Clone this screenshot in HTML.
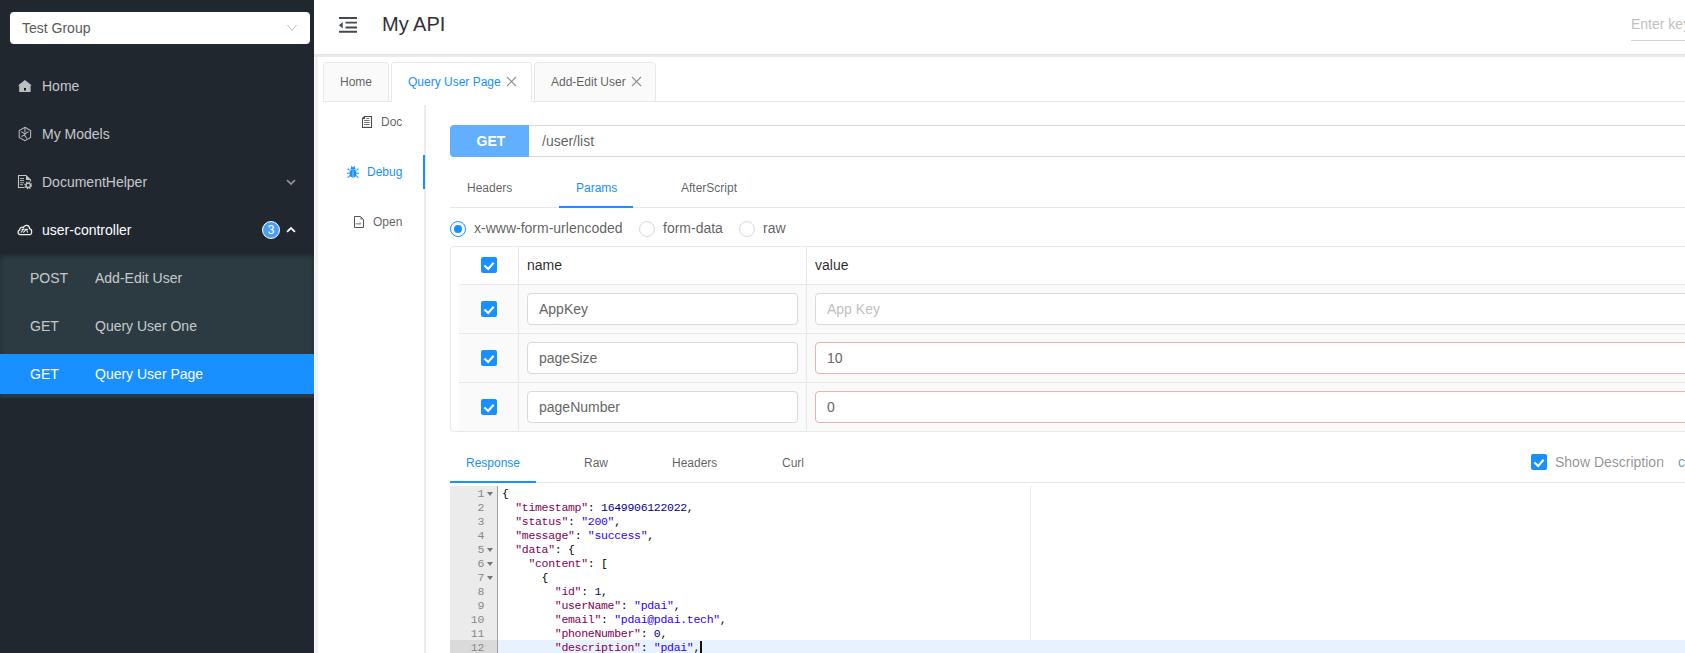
<!DOCTYPE html>
<html><head><meta charset="utf-8">
<style>
*{box-sizing:border-box;margin:0;padding:0}
html,body{width:1685px;height:653px;overflow:hidden;background:#fff;font-family:"Liberation Sans",sans-serif;}
.abs{position:absolute}
#side{position:absolute;left:0;top:0;width:314px;height:653px;background:#20272e}
#sel{position:absolute;left:10px;top:12px;width:300px;height:32px;background:#fff;border-radius:4px}
#sel span{position:absolute;left:12px;top:0;line-height:32px;font-size:14px;color:#595959}
.mi{position:absolute;left:0;width:314px;height:48px;line-height:48px;font-size:14px;color:rgba(255,255,255,.76)}
.mi .t{position:absolute;left:42px;top:0}
.mi svg{position:absolute}
#sub{position:absolute;left:0;top:254px;width:314px;height:144px;background:#2c3b41;box-shadow:inset 0 2px 5px rgba(0,0,0,.3)}
.si{position:absolute;left:0;width:314px;height:40px;line-height:40px;font-size:14px;color:rgba(255,255,255,.74)}
.si .m{position:absolute;left:30px}
.si .n{position:absolute;left:95px}
.si.on{background:#1890ff;color:#fff}
#hdr{position:absolute;left:314px;top:0;width:1371px;height:54px;background:#fff}
#gbar{position:absolute;left:314px;top:54px;width:1371px;height:3px;background:#e9ebef;border-top:1px solid #e3e4e7}
#gstrip{position:absolute;left:314px;top:57px;width:4px;height:596px;background:#f0f1f4;border-left:1px solid #fbfbfc}
.tab{position:absolute;top:62px;height:40px;border:1px solid #e8e8e8;border-radius:4px 4px 0 0;background:#fafafa;font-size:12px;line-height:38px;color:rgba(0,0,0,.65);white-space:nowrap}
.tab.on{background:#fff;color:#1890ff;border-bottom-color:#fff}
.x{position:absolute;top:0}
.vt{position:absolute;font-size:12px;color:rgba(0,0,0,.65);white-space:nowrap}
.vt svg{position:absolute}
.itab{position:absolute;font-size:12px;color:rgba(0,0,0,.65);white-space:nowrap}
.radio{position:absolute;width:16px;height:16px;border:1px solid #d9d9d9;border-radius:50%;background:#fff}
.radio.on{border-color:#1890ff}
.radio.on::after{content:"";position:absolute;left:3px;top:3px;width:8px;height:8px;border-radius:50%;background:#1890ff}
.rl{position:absolute;font-size:14px;color:rgba(0,0,0,.65);white-space:nowrap}
.cb{position:absolute;width:16px;height:16px;background:#1890ff;border-radius:2px}

.inp{position:absolute;height:32px;border:1px solid #d9d9d9;border-radius:4px;background:#fff;font-size:14px;line-height:30px;padding-left:11px;color:#666;white-space:nowrap;overflow:hidden}
.inp.err{border-color:#e9b1b1}
.hl{position:absolute;background:#e8e8e8}
#ed{position:absolute;left:450px;top:486px;width:1235px;height:167px;overflow:hidden;font-family:"Liberation Mono",monospace;font-size:11.5px;letter-spacing:-0.3px}
#gut{position:absolute;left:0;top:0;width:48px;height:167px;background:#ebebeb;border-right:1px solid #9f9f9f}
.ln{position:absolute;left:0;width:47px;height:14px;line-height:16px;text-align:right;padding-right:13px;color:#888}
.cl{position:absolute;left:52px;height:14px;line-height:16px;white-space:pre;color:#000}
.k{color:#7f0055}.s{color:#2a00ff}.nm{color:#00008b}
</style></head><body>
<div id="side">
  <div id="sel"><span>Test Group</span>
    <svg class="abs" style="left:277px;top:12px" width="10" height="8" viewBox="0 0 10 8"><path d="M0.5 1 L5 6.5 L9.5 1" fill="none" stroke="#bfbfbf" stroke-width="1"/></svg>
  </div>
  <div class="mi" style="top:62px">
    <svg style="left:14px;top:14px" width="24" height="20" viewBox="0 0 24 20"><path d="M10.9 3.9 L17.9 9.6 L16.6 9.6 L16.6 16 L5.2 16 L5.2 9.6 L3.9 9.6 Z" fill="#bcbfc0"/><rect x="10" y="12" width="1.9" height="2.5" fill="#0d1216"/></svg>
    <span class="t">Home</span></div>
  <div class="mi" style="top:110px">
    <svg style="left:14px;top:14px" width="24" height="20" viewBox="0 0 24 20"><g fill="none" stroke="#b4b7b9" stroke-width="1.05"><path d="M10.9 3.3 L16.6 6.5 V13.5 L10.9 16.7 L5.2 13.5 V6.5 Z"/><path d="M10.9 3.3 V8.2 M7.2 7.6 L10.9 9.8 L14.6 7.6 M10.9 9.8 V12 M7.5 12.5 L10.9 10.6 M13 14.5 L10.9 12"/></g></svg>
    <span class="t">My Models</span></div>
  <div class="mi" style="top:158px">
    <svg style="left:14px;top:14px" width="24" height="20" viewBox="0 0 24 20"><g fill="none" stroke="#c4c7c9" stroke-width="1.1"><path d="M10.5 15.5 H4.5 V3.5 H12 L16.5 8 V9.5"/></g><path d="M12 3.5 V8 H16.5 Z" fill="#c4c7c9"/><g fill="#b0b4b6"><rect x="6" y="6" width="4" height="1"/><rect x="6" y="8" width="4" height="1"/><rect x="6" y="10.2" width="4" height="1"/><rect x="6" y="12.2" width="3" height="1"/></g><circle cx="14.2" cy="13.3" r="2.2" fill="none" stroke="#c4c7c9" stroke-width="1.4"/><circle cx="14.2" cy="13.3" r="3.3" fill="none" stroke="#c4c7c9" stroke-width="1.3" stroke-dasharray="1.3 1.3"/></svg>
    <span class="t">DocumentHelper</span>
    <svg style="left:286px;top:21px" width="10" height="7" viewBox="0 0 10 7"><path d="M1 1.2 L5 5 L9 1.2" fill="none" stroke="#8a8e91" stroke-width="1.8"/></svg>
  </div>
  <div class="mi" style="top:206px;color:#fff">
    <svg style="left:14px;top:14px" width="24" height="20" viewBox="0 0 24 20"><path d="M6.3 14.6 C3.6 14.6 3.3 10.6 5.6 10.1 C5.5 7.6 8 6.6 9.4 7.6 C10.4 4.4 15.4 4.6 15.6 8.6 C18.4 9.2 18.2 14.6 15.9 14.6 Z" fill="none" stroke="#f0f0f0" stroke-width="1.3"/><path d="M6.8 12.6 L9.6 9.4 H7.4 M9.3 12.6 L12 9.4 M10.6 9.2 H14 M12.6 9.3 L13.6 12.6" fill="none" stroke="#e6e6e6" stroke-width="1.1"/></svg>
    <span class="t">user-controller</span>
    <div class="abs" style="left:262px;top:15px;width:18px;height:18px;border-radius:50%;background:#4c9ff0;border:1px solid #fff;font-size:12px;line-height:16px;text-align:center;color:#fff">3</div>
    <svg style="left:286px;top:20px" width="10" height="7" viewBox="0 0 10 7"><path d="M1 5.8 L5 2 L9 5.8" fill="none" stroke="#fff" stroke-width="1.8"/></svg>
  </div>
  <div id="sub">
    <div class="si" style="top:4px"><span class="m">POST</span><span class="n">Add-Edit User</span></div>
    <div class="si" style="top:52px"><span class="m">GET</span><span class="n">Query User One</span></div>
    <div class="si on" style="top:100px"><span class="m">GET</span><span class="n">Query User Page</span></div>
  </div>
</div>

<div id="hdr">
  <svg class="abs" style="left:25px;top:17px" width="18" height="16" viewBox="0 0 18 16"><path d="M0 1 H18 M6.5 5.6 H18 M6.5 10.5 H18 M0 14.8 H18" stroke="#45494d" stroke-width="1.9"/><path d="M0 8.2 L3.7 4.9 L3.7 11.5 Z" fill="#45494d"/></svg>
  <div class="abs" style="left:68px;top:12px;font-size:20px;line-height:24px;color:#303133">My API</div>
  <div class="abs" style="left:1317px;top:15px;font-size:14px;line-height:18px;color:#bfbfbf;white-space:nowrap">Enter keywords</div>
  <div class="abs" style="left:1317px;top:40px;width:60px;height:1px;background:#d4d4d4"></div>
</div>
<div id="gbar"></div>
<div id="gstrip"></div>

<!-- tabs -->
<div class="hl" style="left:323px;top:101px;width:1362px;height:1px"></div>
<div class="tab" style="left:323px;width:66px"><span class="abs" style="left:16px">Home</span></div>
<div class="tab on" style="left:391px;width:141px"><span class="abs" style="left:16px">Query User Page</span>
  <svg class="x" style="left:114px;top:13px" width="11" height="11" viewBox="0 0 11 11"><path d="M1 1 L10 10 M10 1 L1 10" stroke="#8f8f8f" stroke-width="1.1"/></svg></div>
<div class="tab" style="left:534px;width:122px"><span class="abs" style="left:16px">Add-Edit User</span>
  <svg class="x" style="left:96px;top:13px" width="11" height="11" viewBox="0 0 11 11"><path d="M1 1 L10 10 M10 1 L1 10" stroke="#8f8f8f" stroke-width="1.1"/></svg></div>

<!-- vertical tabs -->
<div class="abs" style="left:424px;top:105px;width:2px;height:548px;background:#ebebeb"></div>
<div class="abs" style="left:423px;top:155px;width:2px;height:34px;background:#1890ff"></div>
<div class="vt" style="left:381px;top:115px">Doc</div>
<svg class="abs" style="left:361px;top:115px" width="12" height="14" viewBox="0 0 12 14"><g fill="none" stroke="#4f4a4a" stroke-width="1.1"><path d="M3.5 1.5 H10.5 V12.5 H1.5 V3.5 Z"/><path d="M3.5 1.5 V3.5 H1.5"/></g><g fill="#5f6368"><rect x="5.2" y="3" width="3" height="0.9"/><rect x="3.2" y="5" width="5.4" height="0.9"/><rect x="3.2" y="7" width="5.4" height="0.9"/><rect x="3.2" y="9" width="5.4" height="0.9"/></g><rect x="3.2" y="11" width="5.4" height="0.6" fill="#c8c8c8"/></svg>
<div class="vt" style="left:367px;top:165px;color:#1890ff">Debug</div>
<svg class="abs" style="left:347px;top:166px" width="12" height="12" viewBox="0 0 12 12"><path d="M3.4 3.6 A2.6 2.6 0 0 1 8.6 3.6 Z" fill="#1890ff"/><ellipse cx="6" cy="7.6" rx="3.5" ry="4.1" fill="#1890ff"/><g stroke="#1890ff" stroke-width="1.1" fill="none"><path d="M0.6 2.6 L2.6 4.4 M11.4 2.6 L9.4 4.4 M0 7.3 H2.6 M12 7.3 H9.4 M0.6 11.6 L2.8 9.6 M11.4 11.6 L9.2 9.6 M4.2 0.4 L5 1.6 M7.8 0.4 L7 1.6"/></g><path d="M6 4.6 V11.4" stroke="#a9d4ff" stroke-width="0.9"/></svg>
<div class="vt" style="left:373px;top:215px">Open</div>
<svg class="abs" style="left:353px;top:216px" width="12" height="12" viewBox="0 0 12 12"><g fill="none" stroke="#555" stroke-width="1"><path d="M1.5 0.5 H7.5 L10.5 3.5 V11.5 H1.5 Z"/></g><path d="M7.5 0.5 V3.5 H10.5 Z" fill="#777"/><path d="M2.5 7 H6.5 V5.5 L8.5 7.5 L6.5 9.5 V8.5 H2.5 Z" fill="#a0a6a6"/></svg>

<!-- GET bar -->
<div class="abs" style="left:450px;top:125px;width:79px;height:32px;background:#61affe;border-radius:4px 0 0 4px;color:#fff;font-weight:bold;font-size:14px;line-height:32px;text-align:center;padding-left:3px">GET</div>
<div class="abs" style="left:529px;top:125px;width:1200px;height:32px;border:1px solid #d9d9d9;border-left:0;background:#fff"><span class="abs" style="left:13px;top:0;line-height:30px;font-size:14px;color:rgba(0,0,0,.65)">/user/list</span></div>

<!-- inner tabs -->
<div class="hl" style="left:450px;top:207px;width:1235px;height:1px"></div>
<div class="itab" style="left:467px;top:181px">Headers</div>
<div class="itab" style="left:576px;top:181px;color:#1890ff">Params</div>
<div class="itab" style="left:681px;top:181px">AfterScript</div>
<div class="abs" style="left:559px;top:206px;width:74px;height:2px;background:#1890ff"></div>

<!-- radios -->
<div class="radio on" style="left:450px;top:221px"></div><div class="rl" style="left:474px;top:220px">x-www-form-urlencoded</div>
<div class="radio" style="left:639px;top:221px"></div><div class="rl" style="left:663px;top:220px">form-data</div>
<div class="radio" style="left:739px;top:221px"></div><div class="rl" style="left:763px;top:220px">raw</div>

<!-- table -->
<div class="abs" style="left:450px;top:246px;width:1300px;height:186px;border:1px solid #e8e8e8;border-radius:4px;overflow:hidden">
  <div class="abs" style="left:8px;top:38px;width:1300px;height:148px;background:#fafafa"></div>
</div>
<div class="hl" style="left:459px;top:284px;width:1226px;height:1px"></div>
<div class="hl" style="left:459px;top:333px;width:1226px;height:1px"></div>
<div class="hl" style="left:459px;top:382px;width:1226px;height:1px"></div>
<div class="hl" style="left:518px;top:247px;width:1px;height:184px"></div>
<div class="hl" style="left:806px;top:247px;width:1px;height:184px"></div>
<div class="cb" style="left:481px;top:257px"><svg class="abs" style="left:0;top:0" width="16" height="16" viewBox="0 0 16 16"><path d="M3.4 8.4 L7.2 11.9 L12.6 5.8" fill="none" stroke="#fff" stroke-width="2.1"/></svg></div>
<div class="rl" style="left:527px;top:257px;color:rgba(0,0,0,.85)">name</div>
<div class="rl" style="left:815px;top:257px;color:rgba(0,0,0,.85)">value</div>
<div class="cb" style="left:481px;top:301px"><svg class="abs" style="left:0;top:0" width="16" height="16" viewBox="0 0 16 16"><path d="M3.4 8.4 L7.2 11.9 L12.6 5.8" fill="none" stroke="#fff" stroke-width="2.1"/></svg></div>
<div class="inp" style="left:527px;top:293px;width:271px">AppKey</div>
<div class="inp" style="left:815px;top:293px;width:900px;color:#bfbfbf">App Key</div>
<div class="cb" style="left:481px;top:350px"><svg class="abs" style="left:0;top:0" width="16" height="16" viewBox="0 0 16 16"><path d="M3.4 8.4 L7.2 11.9 L12.6 5.8" fill="none" stroke="#fff" stroke-width="2.1"/></svg></div>
<div class="inp" style="left:527px;top:342px;width:271px">pageSize</div>
<div class="inp err" style="left:815px;top:342px;width:900px">10</div>
<div class="cb" style="left:481px;top:399px"><svg class="abs" style="left:0;top:0" width="16" height="16" viewBox="0 0 16 16"><path d="M3.4 8.4 L7.2 11.9 L12.6 5.8" fill="none" stroke="#fff" stroke-width="2.1"/></svg></div>
<div class="inp" style="left:527px;top:391px;width:271px">pageNumber</div>
<div class="inp err" style="left:815px;top:391px;width:900px">0</div>

<!-- response tabs -->
<div class="hl" style="left:450px;top:482px;width:1235px;height:1px"></div>
<div class="itab" style="left:466px;top:456px;color:#1890ff">Response</div>
<div class="itab" style="left:584px;top:456px">Raw</div>
<div class="itab" style="left:672px;top:456px">Headers</div>
<div class="itab" style="left:782px;top:456px">Curl</div>
<div class="abs" style="left:450px;top:481px;width:86px;height:2px;background:#1890ff"></div>
<div class="cb" style="left:1531px;top:454px"><svg class="abs" style="left:0;top:0" width="16" height="16" viewBox="0 0 16 16"><path d="M3.4 8.4 L7.2 11.9 L12.6 5.8" fill="none" stroke="#fff" stroke-width="2.1"/></svg></div>
<div class="rl" style="left:1555px;top:454px;color:rgba(0,0,0,.45)">Show Description</div>
<div class="rl" style="left:1678px;top:454px;color:rgba(0,0,0,.45)">c</div>

<!-- editor -->
<div id="ed">
  <div class="abs" style="left:580px;top:0;width:1px;height:167px;background:#ebebeb"></div>
  <div class="abs" style="left:48px;top:154px;width:1300px;height:14px;background:#e8f2fe"></div>
  <div id="gut">
    <div class="abs" style="left:0;top:154px;width:47px;height:14px;background:#dadada"></div>
<div class="ln" style="top:0px">1</div>
<svg class="abs" style="left:37px;top:6px" width="6" height="4" viewBox="0 0 6 4"><path d="M0 0 H6 L3 4 Z" fill="#777"/></svg>
<div class="ln" style="top:14px">2</div>
<div class="ln" style="top:28px">3</div>
<div class="ln" style="top:42px">4</div>
<div class="ln" style="top:56px">5</div>
<svg class="abs" style="left:37px;top:62px" width="6" height="4" viewBox="0 0 6 4"><path d="M0 0 H6 L3 4 Z" fill="#777"/></svg>
<div class="ln" style="top:70px">6</div>
<svg class="abs" style="left:37px;top:76px" width="6" height="4" viewBox="0 0 6 4"><path d="M0 0 H6 L3 4 Z" fill="#777"/></svg>
<div class="ln" style="top:84px">7</div>
<svg class="abs" style="left:37px;top:90px" width="6" height="4" viewBox="0 0 6 4"><path d="M0 0 H6 L3 4 Z" fill="#777"/></svg>
<div class="ln" style="top:98px">8</div>
<div class="ln" style="top:112px">9</div>
<div class="ln" style="top:126px">10</div>
<div class="ln" style="top:140px">11</div>
<div class="ln" style="top:154px">12</div>
  </div>
  <div id="lines"><div class="cl" style="top:0px">{</div>
<div class="cl" style="top:14px">  <span class="k">"timestamp"</span>: <span class="nm">1649906122022</span>,</div>
<div class="cl" style="top:28px">  <span class="k">"status"</span>: <span class="s">"200"</span>,</div>
<div class="cl" style="top:42px">  <span class="k">"message"</span>: <span class="s">"success"</span>,</div>
<div class="cl" style="top:56px">  <span class="k">"data"</span>: {</div>
<div class="cl" style="top:70px">    <span class="k">"content"</span>: [</div>
<div class="cl" style="top:84px">      {</div>
<div class="cl" style="top:98px">        <span class="k">"id"</span>: <span class="nm">1</span>,</div>
<div class="cl" style="top:112px">        <span class="k">"userName"</span>: <span class="s">"pdai"</span>,</div>
<div class="cl" style="top:126px">        <span class="k">"email"</span>: <span class="s">"pdai@pdai.tech"</span>,</div>
<div class="cl" style="top:140px">        <span class="k">"phoneNumber"</span>: <span class="nm">0</span>,</div>
<div class="cl" style="top:154px">        <span class="k">"description"</span>: <span class="s">"pdai"</span>,</div>
<div class="abs" style="left:250px;top:155px;width:2px;height:13px;background:#1a0a0a"></div></div>
</div>
</body></html>
